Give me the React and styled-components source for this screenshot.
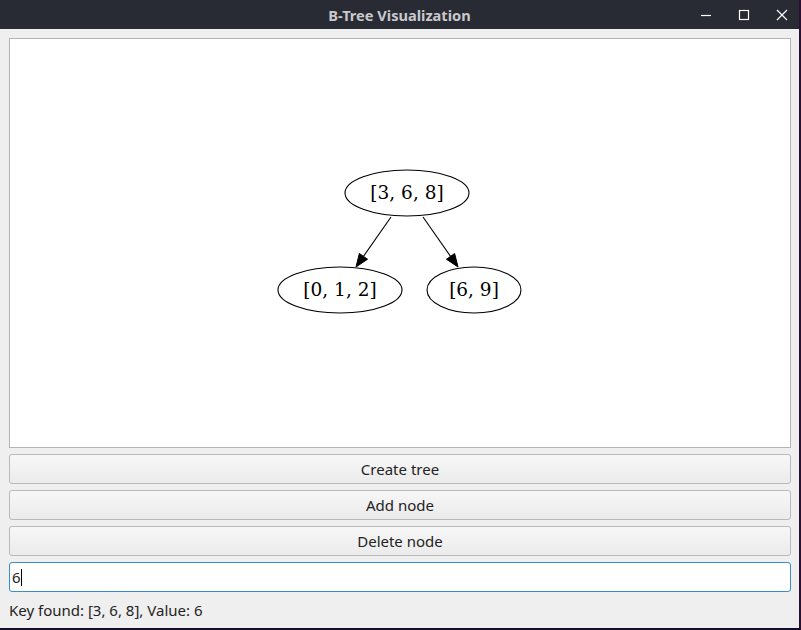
import React from 'react';
import styled, { createGlobalStyle } from 'styled-components';

const GlobalStyle = createGlobalStyle`
  html, body {
    margin: 0;
    padding: 0;
    background: #1b1024;
  }
`;

const Window = styled.div`
  width: 799px;
  height: 628px;
  display: flex;
  flex-direction: column;
  background-color: #efefef;
  font-family: 'Noto Sans', 'Open Sans', sans-serif;
  border-right: 2px solid #2a0f33;
  border-bottom: 2px solid #160d2a;
`;

const TitleBar = styled.div`
  height: 29px;
  flex-shrink: 0;
  display: flex;
  align-items: center;
  justify-content: center;
  position: relative;
  background-color: #282b34;
  color: #c9c9cc;
  font-weight: bold;
  font-size: 14.6px;
`;

const WindowControls = styled.div`
  position: absolute;
  right: -2px;
  top: 0;
  height: 29px;
  display: flex;
  align-items: center;
`;

const ControlButton = styled.div`
  width: 38px;
  height: 29px;
  display: flex;
  align-items: center;
  justify-content: center;
`;

const Body = styled.div`
  flex: 1;
  display: flex;
  flex-direction: column;
  gap: 6px;
  padding: 9px 8px 0 9px;
`;

const Canvas = styled.div`
  height: 408px;
  background: #ffffff;
  border: 1px solid #b4b4b4;
  display: flex;
  align-items: flex-start;
  justify-content: center;
`;

const Button = styled.button`
  height: 30px;
  width: 100%;
  box-sizing: border-box;
  border: 1px solid #b9b9b9;
  border-radius: 3px;
  background: linear-gradient(#f7f7f7, #ebebeb);
  font-family: 'Noto Sans', 'Open Sans', sans-serif;
  font-size: 15px;
  color: #232323;
  padding: 0;
`;

const Input = styled.div`
  height: 30px;
  box-sizing: border-box;
  border: 1px solid #3b8ccc;
  border-radius: 3px;
  background: #ffffff;
  display: flex;
  align-items: center;
  padding-left: 2px;
  font-size: 15px;
  color: #232323;
`;

const Caret = styled.span`
  display: inline-block;
  width: 1px;
  height: 17px;
  background: #000;
`;

const Status = styled.div`
  font-size: 15px;
  color: #232323;
  margin-top: 2px;
  height: 24px;
`;

const nodes = [
  { label: '[3, 6, 8]', x: 407, y: 193, rx: 62, ry: 23 },
  { label: '[0, 1, 2]', x: 340, y: 290, rx: 62, ry: 23 },
  { label: '[6, 9]', x: 474, y: 290, rx: 47, ry: 23 },
];

const edges = [
  { from: [391, 217], tip: [356, 267] },
  { from: [423, 217], tip: [458, 267] },
];

const edgeShape = ({ from, tip }) => {
  const [fx, fy] = from;
  const [tx, ty] = tip;
  const dx = tx - fx;
  const dy = ty - fy;
  const len = Math.hypot(dx, dy);
  const ux = dx / len;
  const uy = dy / len;
  const bx = tx - ux * 13;
  const by = ty - uy * 13;
  const px = -uy * 5;
  const py = ux * 5;
  return {
    line: [fx, fy, bx, by],
    head: `${tx},${ty} ${bx + px},${by + py} ${bx - px},${by - py}`,
  };
};

const TreeGraph = () => (
  <svg width="780" height="408" viewBox="10 39 780 408">
    {edges.map((e, i) => {
      const s = edgeShape(e);
      return (
        <g key={i}>
          <line x1={s.line[0]} y1={s.line[1]} x2={s.line[2]} y2={s.line[3]} stroke="#000" strokeWidth="1.1" />
          <polygon points={s.head} fill="#000" stroke="#000" strokeWidth="1" />
        </g>
      );
    })}
    {nodes.map((n) => (
      <g key={n.label}>
        <ellipse cx={n.x} cy={n.y} rx={n.rx} ry={n.ry} fill="none" stroke="#000" strokeWidth="1.1" />
        <text
          x={n.x}
          y={n.y + 6}
          textAnchor="middle"
          fontFamily="'DejaVu Serif', serif"
          fontSize="18.5"
          fill="#000"
        >
          {n.label}
        </text>
      </g>
    ))}
  </svg>
);

const App = () => (
  <>
    <GlobalStyle />
    <Window>
      <TitleBar>
        B-Tree Visualization
        <WindowControls>
          <ControlButton>
            <svg width="12" height="12" viewBox="0 0 12 12">
              <line x1="1" y1="6.5" x2="11" y2="6.5" stroke="#fff" strokeWidth="1.2" />
            </svg>
          </ControlButton>
          <ControlButton>
            <svg width="12" height="12" viewBox="0 0 12 12">
              <rect x="1.5" y="1.5" width="9" height="9" fill="none" stroke="#fff" strokeWidth="1.2" />
            </svg>
          </ControlButton>
          <ControlButton>
            <svg width="12" height="12" viewBox="0 0 12 12">
              <path d="M1 1 L11 11 M11 1 L1 11" stroke="#fff" strokeWidth="1.2" />
            </svg>
          </ControlButton>
        </WindowControls>
      </TitleBar>
      <Body>
        <Canvas>
          <TreeGraph />
        </Canvas>
        <Button>Create tree</Button>
        <Button>Add node</Button>
        <Button>Delete node</Button>
        <Input>
          6<Caret />
        </Input>
        <Status>Key found: [3, 6, 8], Value: 6</Status>
      </Body>
    </Window>
  </>
);

export default App;
